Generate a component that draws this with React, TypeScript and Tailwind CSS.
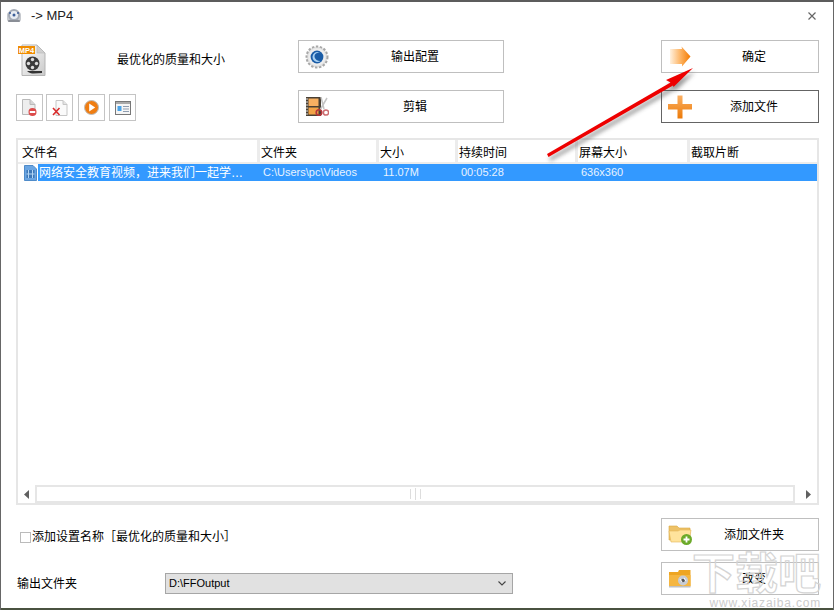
import type { ReactNode } from "react";

const columns = ["文件名", "文件夹", "大小", "持续时间", "屏幕大小", "截取片断"];

function AppIcon() {
  return (
    <svg width="16" height="16" viewBox="0 0 16 16">
      <rect x="1" y="4" width="14" height="10" rx="3" fill="#c6c9ce" />
      <circle cx="8" cy="7" r="6" fill="#a4abb6" />
      <circle cx="8" cy="7" r="4" fill="#e8ecf2" />
      <circle cx="8" cy="7" r="1.5" fill="#3d5f99" />
      <rect x="2" y="12" width="12" height="2" rx="1" fill="#8a8e96" />
      <circle cx="4" cy="5" r="1" fill="#3b5a94" />
      <circle cx="12" cy="5" r="1" fill="#3b5a94" />
    </svg>
  );
}

function Mp4Icon() {
  return (
    <svg width="28" height="33" viewBox="0 0 28 33">
      <defs>
        <linearGradient id="mp4doc" x1="0" y1="0" x2="1" y2="1">
          <stop offset="0" stopColor="#ffffff" />
          <stop offset="1" stopColor="#c9c9c9" />
        </linearGradient>
      </defs>
      <path d="M4 1H19L27 9V31.5H4Z" fill="url(#mp4doc)" stroke="#b5b5b5" />
      <path d="M19 1V9H27Z" fill="#d0d0d0" stroke="#b5b5b5" strokeWidth=".6" />
      <rect x="0" y="2" width="17" height="8" fill="#f08c00" />
      <text x="8.5" y="9" textAnchor="middle" fontSize="7.5" fontWeight="700" fill="#fff" fontFamily="Liberation Sans">
        MP4
      </text>
      <path d="M9 27C13 31 18 29 24 29V27H15Z" fill="#333" />
      <circle cx="14.5" cy="19.5" r="7" fill="#3b3b3b" />
      <circle cx="14.5" cy="15.5" r="1.7" fill="#ddd" />
      <circle cx="14.5" cy="23.5" r="1.7" fill="#ddd" />
      <circle cx="10.5" cy="19.5" r="1.7" fill="#ddd" />
      <circle cx="18.5" cy="19.5" r="1.7" fill="#ddd" />
    </svg>
  );
}

function GearIcon() {
  return (
    <svg width="24" height="24" viewBox="0 0 24 24">
      <circle cx="12" cy="12" r="10.5" fill="#e3e3e3" stroke="#a8a8a8" strokeWidth="2" strokeDasharray="2.4 1.6" />
      <circle cx="12" cy="12" r="8.5" fill="#eeeeee" />
      <circle cx="12" cy="12" r="6.4" fill="#1a5ca6" />
      <path d="M16.5 9A5 5 0 1 0 15.5 16A6 6 0 0 1 9.5 12A4 4 0 0 1 16.5 9Z" fill="#a8d0f2" />
    </svg>
  );
}

function ClipIcon() {
  return (
    <svg width="23" height="20" viewBox="0 0 23 20">
      <rect x="0" y="0" width="15" height="19" fill="#4a4034" />
      <rect x="2.5" y="1.5" width="10" height="7.5" fill="#f7b061" />
      <rect x="2.5" y="10.5" width="10" height="7" fill="#f2a347" />
      <path d="M0 2H2M0 5H2M0 8H2M0 11H2M0 14H2M0 17H2" stroke="#ddd" />
      <path d="M15 0L18 12M21 1L14 13" stroke="#c4c4c4" strokeWidth="1.5" />
      <circle cx="13" cy="15.5" r="2.8" fill="none" stroke="#b8353a" strokeWidth="1.6" />
      <circle cx="20" cy="15.5" r="2.6" fill="none" stroke="#cc6a6e" strokeWidth="1.5" />
    </svg>
  );
}

function ArrowIcon() {
  return (
    <svg width="22" height="22" viewBox="0 0 22 22">
      <defs>
        <linearGradient id="okarrow" x1="0" y1="0" x2="1" y2="0">
          <stop offset="0" stopColor="#fff1df" />
          <stop offset=".5" stopColor="#fdb566" />
          <stop offset="1" stopColor="#f47a00" />
        </linearGradient>
      </defs>
      <path d="M1 3H13L12.5 0.5L21.5 10.5L13 20.5L13 18H1Z" fill="url(#okarrow)" />
    </svg>
  );
}

function PlusIcon() {
  return (
    <svg width="24" height="24" viewBox="0 0 24 24">
      <defs>
        <linearGradient id="plusv" x1="0" y1="0" x2="0" y2="1">
          <stop offset="0" stopColor="#fbb063" />
          <stop offset="1" stopColor="#ec7a08" />
        </linearGradient>
      </defs>
      <path d="M9.5 0.5H14.5V9H24V14.5H14.5V23.5H9.5V14.5H0V9H9.5Z" fill="url(#plusv)" />
    </svg>
  );
}

function FolderAddIcon() {
  return (
    <svg width="25" height="22" viewBox="0 0 25 22">
      <path d="M1 2H9L11 4H22V16H1Z" fill="#eec267" stroke="#d9a945" strokeWidth=".6" />
      <path d="M1 7H10L12 6H23L21 18H3Z" fill="#ffe39c" stroke="#e2b658" strokeWidth=".6" />
      <circle cx="18.5" cy="15.5" r="5.5" fill="#6caa2a" />
      <path d="M15.5 15.5H21.5M18.5 12.5V18.5" stroke="#fff" strokeWidth="1.8" />
    </svg>
  );
}

function FolderDiscIcon() {
  return (
    <svg width="22" height="18" viewBox="0 0 22 18">
      <path d="M0 2H9L10 0H21.5V16H0Z" fill="#eea522" />
      <path d="M0 5H21.5V16.5H0Z" fill="#f5b640" />
      <rect x="0" y="16" width="21.5" height="1.5" fill="#c0c0c0" />
      <circle cx="14" cy="10.5" r="5" fill="#c8ccd4" />
      <circle cx="14" cy="10.5" r="1.8" fill="#555" />
      <path d="M11 9L13 12M15 8L17 11" stroke="#fff" />
    </svg>
  );
}

function DocRemoveIcon() {
  return (
    <svg width="16" height="18" viewBox="0 0 16 18">
      <path d="M.5.5H8L13 5.5V15.5H.5Z" fill="#eeeeee" stroke="#b9b9b9" />
      <path d="M8 .5V5.5H13" fill="#d6d6d6" stroke="#b9b9b9" />
      <circle cx="10.5" cy="13" r="4" fill="#dc4b4b" />
      <rect x="7.8" y="12" width="5.4" height="2" fill="#fff" />
    </svg>
  );
}

function DocCrossIcon() {
  return (
    <svg width="16" height="16" viewBox="0 0 16 16">
      <path d="M4 .5H11L15 4.5V15.5H4Z" fill="#fafafa" stroke="#c6c6c6" />
      <path d="M11 .5V4.5H15" fill="#e3e3e3" stroke="#c6c6c6" />
      <path d="M1 8L7.5 15M7.5 8L1 15" stroke="#d92c2c" strokeWidth="1.6" />
    </svg>
  );
}

function PlayIcon() {
  return (
    <svg width="15" height="15" viewBox="0 0 15 15">
      <circle cx="7.5" cy="7.5" r="7" fill="#ef7d12" stroke="#bcbcbc" />
      <path d="M5.2 3.6L11.2 7.5L5.2 11.4Z" fill="#fff" />
    </svg>
  );
}

function InfoIcon() {
  return (
    <svg width="16" height="14" viewBox="0 0 16 14">
      <rect x=".5" y=".5" width="15" height="13" fill="#f5f5f5" stroke="#777" />
      <rect x="1" y="1" width="14" height="2" fill="#a9a9a9" />
      <rect x="2.5" y="5" width="4" height="5" fill="#4aa3e8" />
      <path d="M8 5.5H14M8 8H14M8 10.5H14" stroke="#8f9db0" />
    </svg>
  );
}

function VideoRowIcon() {
  return (
    <svg width="13" height="16" viewBox="0 0 13 16">
      <path d="M.5.5H9L12.5 4V15.5H.5Z" fill="#6aa5e2" stroke="#4f8bc9" />
      <rect x="2.5" y="5" width="8" height="8" fill="#3d78b8" />
      <path d="M4.5 5V13M8.5 5V13M2.5 9H10.5" stroke="#b4d6f5" />
    </svg>
  );
}

function ActionButton({ icon, label, active }: { icon: ReactNode; label: string; active?: boolean }) {
  return (
    <button
      className={`relative flex h-[33px] w-full items-center justify-center border pl-7 text-xs text-black ${
        active ? "border-[#646464]" : "border-[#bfbfbf]"
      }`}
    >
      <span className="absolute left-1 flex h-full w-7 items-center justify-center">{icon}</span>
      {label}
    </button>
  );
}

function ToolButton({ children }: { children: ReactNode }) {
  return <button className="flex h-[27px] w-[27px] items-center justify-center border border-[#c4c4c4]">{children}</button>;
}

export default function App() {
  return (
    <div className="relative flex h-[610px] w-[834px] flex-col overflow-hidden border-x border-t-2 border-x-[#666666] border-t-[#5c5c5c] bg-white font-['Liberation_Sans','Noto_Sans_CJK_SC',sans-serif] text-xs text-black">
      {/* title bar */}
      <div className="flex h-[29px] shrink-0 items-center pb-[2px] pl-[5px] pr-[17px]">
        <AppIcon />
        <span className="ml-[9px] text-[13px] text-[#222222]">-&gt; MP4</span>
        <svg className="ml-auto" width="8" height="8" viewBox="0 0 8 8">
          <path d="M.5.5L7.5 7.5M7.5.5L.5 7.5" stroke="#666666" strokeWidth="1.2" />
        </svg>
      </div>

      {/* top controls */}
      <div className="mt-[9px] flex h-[83px] shrink-0 pl-[15px]">
        <div className="flex w-[282px] flex-col">
          <div className="flex h-[36px] items-center">
            <span className="ml-[2px] mt-1">
              <Mp4Icon />
            </span>
            <span className="ml-[71px] mt-1">最优化的质量和大小</span>
          </div>
          <div className="mt-[18px] flex gap-[3px]">
            <ToolButton>
              <DocRemoveIcon />
            </ToolButton>
            <ToolButton>
              <DocCrossIcon />
            </ToolButton>
            <span className="ml-[2px]">
              <ToolButton>
                <PlayIcon />
              </ToolButton>
            </span>
            <span className="ml-[1px]">
              <ToolButton>
                <InfoIcon />
              </ToolButton>
            </span>
          </div>
        </div>
        <div className="flex w-[206px] flex-col gap-[17px]">
          <ActionButton icon={<GearIcon />} label="输出配置" />
          <ActionButton icon={<ClipIcon />} label="剪辑" />
        </div>
        <div className="ml-[157px] flex w-[158px] flex-col gap-[17px]">
          <ActionButton icon={<ArrowIcon />} label="确定" />
          <ActionButton icon={<PlusIcon />} label="添加文件" active />
        </div>
      </div>

      {/* file list */}
      <div className="ml-[15px] mt-[15px] flex h-[367px] w-[803px] shrink-0 flex-col border-2 border-[#e6e6e6]">
        <div className="grid h-[24px] shrink-0 grid-cols-[239px_119px_79px_120px_112px_1fr] border-b-2 border-[#ececec]">
          {columns.map((column, i) => (
            <div
              key={column}
              className={`flex items-center pt-[3px] ${i === 0 ? "pl-[4px]" : "border-l-[3px] border-[#ececec] pl-[1px]"}`}
            >
              {column}
            </div>
          ))}
        </div>
        <div className="grid h-[17px] shrink-0 grid-cols-[239px_119px_79px_120px_112px_1fr] text-white">
          <div className="flex items-center pl-[6px]">
            <VideoRowIcon />
            <span className="ml-[1px] flex h-full flex-1 items-center bg-[#3399ff] pl-[1px]">
              网络安全教育视频，进来我们一起学…
            </span>
          </div>
          <div className="flex items-center bg-[#3399ff] pl-[6px] text-[11px] text-[#e8f3ff]">C:\Users\pc\Videos</div>
          <div className="flex items-center bg-[#3399ff] pl-[7px] text-[11px] text-[#e8f3ff]">11.07M</div>
          <div className="flex items-center bg-[#3399ff] pl-[6px] text-[11px] text-[#e8f3ff]">00:05:28</div>
          <div className="flex items-center bg-[#3399ff] pl-[6px] text-[11px] text-[#e8f3ff]">636x360</div>
          <div className="bg-[#3399ff]" />
        </div>
        <div className="flex-1" />
        <div className="flex h-[18px] shrink-0 items-center">
          <svg className="ml-[6px]" width="5" height="9" viewBox="0 0 5 9">
            <path d="M5 0V9L0 4.5Z" fill="#606060" />
          </svg>
          <div className="ml-[6px] flex h-[18px] w-[760px] items-center justify-center gap-[4px] border-2 border-[#e6e6e6]">
            <span className="h-[10px] w-[1px] bg-[#dddddd]" />
            <span className="h-[12px] w-[1px] bg-[#dddddd]" />
            <span className="h-[10px] w-[1px] bg-[#dddddd]" />
          </div>
          <svg className="ml-[11px]" width="5" height="9" viewBox="0 0 5 9">
            <path d="M0 0V9L5 4.5Z" fill="#606060" />
          </svg>
        </div>
      </div>

      {/* bottom controls */}
      <div className="mt-[13px] flex flex-1 pl-[16px]">
        <div className="flex w-[497px] flex-col">
          <label className="mt-[11px] flex items-center">
            <span className="ml-[3px] h-[11px] w-[11px] border border-[#bbbbbb]" />
            <span className="ml-[1px]">添加设置名称［最优化的质量和大小］</span>
          </label>
          <div className="mt-[28px] flex items-center">
            <span className="w-[148px]">输出文件夹</span>
            <div className="flex h-[21px] w-[348px] items-center justify-between border border-[#a6a6a6] bg-[#e1e1e1] pl-[3px] pr-[6px] text-[11px]">
              D:\FFOutput
              <svg width="8" height="5" viewBox="0 0 8 5">
                <path d="M.5.5L4 4L7.5.5" fill="none" stroke="#444444" strokeWidth="1.1" />
              </svg>
            </div>
          </div>
        </div>
        <div className="ml-[147px] flex w-[158px] flex-col gap-[11px]">
          <ActionButton icon={<FolderAddIcon />} label="添加文件夹" />
          <ActionButton icon={<FolderDiscIcon />} label="改变" />
        </div>
      </div>

      <div className="h-[2px] shrink-0 bg-[#4a5240]" />

      {/* red annotation arrow */}
      <svg className="pointer-events-none absolute left-[-1px] top-[-2px]" width="834" height="610" viewBox="0 0 834 610">
        <defs>
          <filter id="arrowshadow" x="-10%" y="-10%" width="120%" height="130%">
            <feGaussianBlur stdDeviation="2" />
          </filter>
        </defs>
        <path d="M693 68L666 80L670.5 82.5L547 154L548.5 157L673 85.5L673.5 87Z" fill="#555555" opacity=".6" filter="url(#arrowshadow)" transform="translate(2 4)" />
        <path d="M693 68L666 80L670.5 82.5L547 154L548.5 157L673 85.5L673.5 87Z" fill="#ee0000" />
      </svg>

      {/* site watermark */}
      <div className="pointer-events-none absolute bottom-[2px] right-[12px] flex flex-col items-end">
        <span className="text-[43px] font-bold leading-[47px] text-transparent [-webkit-text-stroke:1.2px_#d4d4d4]">下载吧</span>
        <span className="text-[12px] leading-[10px] tracking-[0.8px] text-[#cccccc]">www.xiazaiba.com</span>
      </div>
    </div>
  );
}
